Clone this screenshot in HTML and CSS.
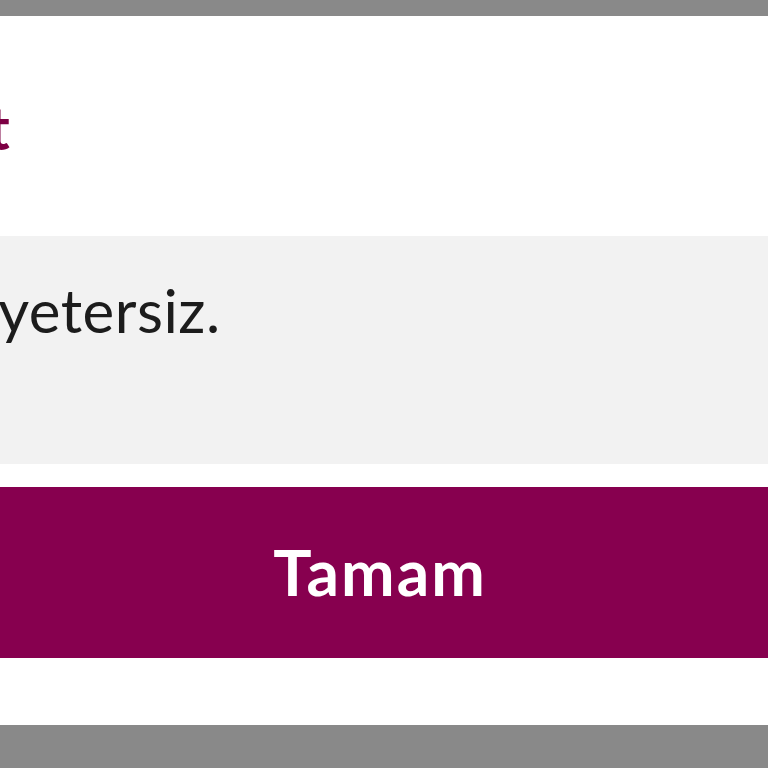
FILE: index.html
```html
<!DOCTYPE html>
<html lang="tr">
<head>
    <meta charset="UTF-8">
    <meta name="viewport" content="width=device-width, initial-scale=1.0">
    <title>Dikkat</title>
    <link rel="stylesheet" href="styles.css">
</head>
<body>
    <!-- Hinweis-Dialog -->
    <div class="dialog">
        <div class="dialog-title">Dikkat</div>
        <div class="dialog-body">
            <p class="message">Bakiye yetersiz.</p>
        </div>
        <div class="dialog-actions">
            <button class="btn-ok" type="button">Tamam</button>
        </div>
    </div>
</body>
</html>
```

FILE: styles.css
```css
/* Grundlegende Stile */
* {
    box-sizing: border-box;
    margin: 0;
    padding: 0;
}

body {
    font-family: 'Lato', 'Noto Sans', sans-serif;
    background-color: #898989;
    height: 100vh;
    overflow: hidden;
    padding-top: 16px;
}

.dialog {
    background-color: #fff;
    width: 1148px;
    margin-left: -194px; /* Dialog ist breiter als das Fenster */
    height: 709px;
    display: flex;
    flex-direction: column;
}

.dialog-title {
    height: 220px;
    padding: 75px 27px 0;
    font-size: 60px;
    line-height: 1.2;
    font-weight: 700;
    color: #7d0044;
}

.dialog-body {
    background-color: #f2f2f2;
    height: 228px;
    padding: 38px 0 0;
}

.message {
    font-size: 60px;
    line-height: 1.2;
    letter-spacing: 0.5px;
    color: #1c1c1c;
}

.dialog-actions {
    padding-top: 23px;
}

.btn-ok {
    display: flex;
    align-items: center;
    justify-content: center;
    width: 100%;
    height: 171px;
    border: none;
    background-color: #87004f;
    color: #fff;
    font-family: inherit;
    font-size: 64px;
    line-height: 1.2;
    font-weight: 700;
    letter-spacing: 2px;
    cursor: pointer;
}
```
